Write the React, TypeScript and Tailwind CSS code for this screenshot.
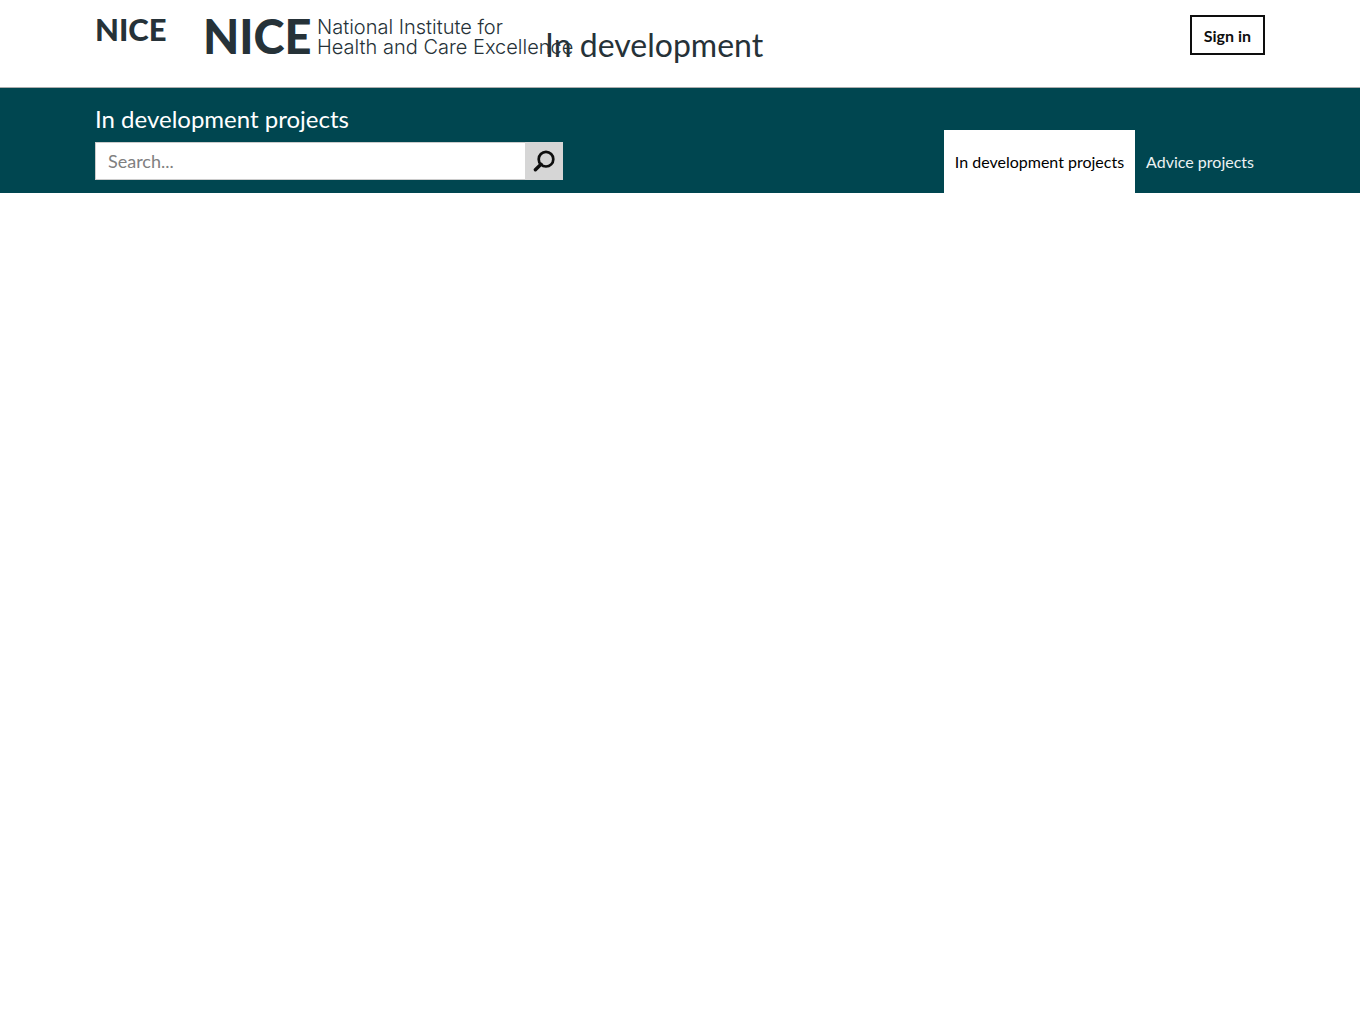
import React from "react";

function Brand() {
  return (
    <div className="flex min-w-0 items-start text-[#263238]">
      <a href="#home" aria-label="NICE home" className="w-[108px] shrink-0 text-[31px] leading-[58px] font-black">
        NICE
      </a>
      <a href="#institute" className="flex w-[342px] shrink-0 items-start whitespace-nowrap">
        <span className="w-[114px] shrink-0 text-[47px] leading-[72px] font-black">NICE</span>
        <span className="pt-[17px] font-['Inter',sans-serif] text-[20px] leading-[20px] font-light">
          National Institute for
          <br />
          Health and Care Excellence
        </span>
      </a>
      <span className="pt-[22px] text-[32px] leading-[46px] whitespace-nowrap">In development</span>
    </div>
  );
}

function SearchForm() {
  return (
    <form className="flex h-[38px] w-full max-w-[468px]" role="search" onSubmit={(e) => e.preventDefault()}>
      <input
        type="text"
        aria-label="Search projects"
        placeholder="Search..."
        className="min-w-0 flex-1 border border-r-0 border-[#ccc] bg-white px-3 text-[18px] text-black placeholder:text-[#808080]"
      />
      <button type="submit" aria-label="Search" className="flex w-[38px] items-center justify-center bg-[#d6d6d6] text-[#0e0e0e]">
        <svg viewBox="0 0 22 22" className="size-[22px]" fill="none" stroke="currentColor" aria-hidden="true">
          <circle cx="13" cy="9.2" r="7.3" strokeWidth="2.7" />
          <path d="M8 14.2 L2.4 19.8" strokeWidth="3.4" strokeLinecap="round" />
        </svg>
      </button>
    </form>
  );
}

export default function App() {
  return (
    <div className="min-h-screen bg-white font-['Lato',sans-serif]">
      <header className="border-b border-[#adadad]">
        <div className="mx-auto flex min-h-[87px] max-w-[1170px] items-start justify-between">
          <Brand />
          <a href="#sign-in" className="mt-[15px] flex h-10 shrink-0 items-center border-2 border-[#0e0e0e] px-3 pt-[2px] text-base font-bold text-[#0e0e0e]">
            Sign in
          </a>
        </div>
      </header>
      <section className="bg-[#004650]">
        <div className="mx-auto flex max-w-[1170px] items-end justify-between">
          <div className="w-1/2 pt-4 pb-[13px]">
            <h1 className="mb-2 text-2xl leading-[30px] text-white">In development projects</h1>
            <SearchForm />
          </div>
          <nav aria-label="Projects" className="flex text-base leading-[63px] whitespace-nowrap">
            <a href="#development" aria-current="page" className="bg-white px-[11px] text-black">
              In development projects
            </a>
            <a href="#advice" className="px-[11px] text-[#ecf2f3]">
              Advice projects
            </a>
          </nav>
        </div>
      </section>
    </div>
  );
}
